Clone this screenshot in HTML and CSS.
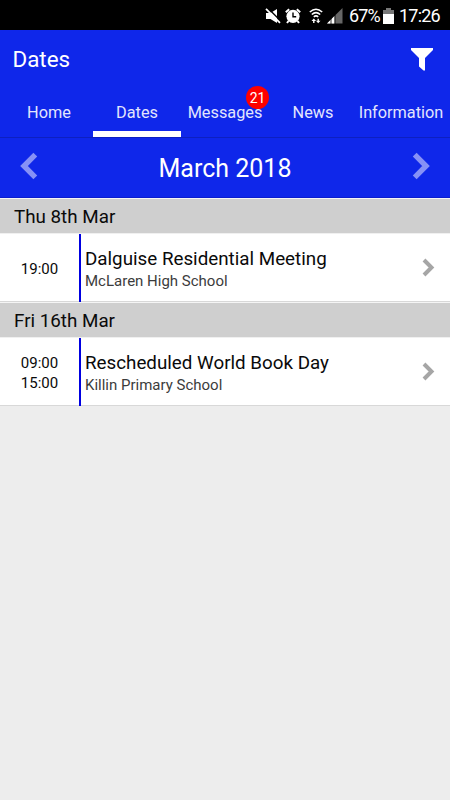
FILE: index.html
```html
<!DOCTYPE html>
<html lang="en">
<head>
<meta charset="utf-8">
<title>Dates</title>
<link rel="stylesheet" href="styles.css">
</head>

<body>
	<div class="status">
		<svg class="mute" width="16" height="16" viewBox="0 0 16 16">
			<path d="M1 5h4.5L12 1v14l-6.5-4H1z" fill="#fff"/>
			<path d="M2.8 0l14 14" stroke="#000" stroke-width="1.4"/>
			<path d="M1 .8l14 14" stroke="#fff" stroke-width="1.8"/>
		</svg>
		<svg class="alarm" width="16" height="16" viewBox="0 0 16 16">
			<circle cx="8" cy="8.3" r="6.6" fill="#fff"/>
			<path d="M.8 4.2l3.4-3M15.2 4.2l-3.4-3M3.5 13l-1.5 2M12.5 13l1.5 2" stroke="#fff" stroke-width="2"/>
			<path d="M8 4.5v4.3h3.2" fill="none" stroke="#000" stroke-width="1.4"/>
		</svg>
		<svg class="wifi" width="14" height="16" viewBox="0 0 14 16">
			<path d="M.8 4Q7-1.5 13.2 4M2.8 6.5Q7 2.8 11.2 6.5M4.8 8.8Q7 7 9.2 8.8" fill="none" stroke="#fff" stroke-width="1.6"/>
			<path d="M4.8 10.5L2.5 13h1.6v2h1.4v-2h1.6zM9.2 15.3l-2.3-2.5h1.6v-2h1.4v2h1.6z" fill="#fff"/>
		</svg>
		<svg class="signal" width="16" height="16" viewBox="0 0 16 16">
			<path d="M0 15.5L15.5 0v15.5z" fill="#666"/>
			<path d="M0 15.5L7.5 8v7.5z" fill="#fff"/>
			<path d="M4 10v6M8 7v9" stroke="#000" stroke-width=".8"/>
		</svg>
		<span class="percent">67%</span>
		<svg class="battery" width="11" height="16" viewBox="0 0 11 16">
			<path d="M3 0h5v2h3v14H0V2h3z" fill="#777"/>
			<path d="M0 6h11v10H0z" fill="#fff"/>
		</svg>
		<span class="clock">17:26</span>
	</div>

	<div class="header">
		<h1>Dates</h1>
		<svg width="22" height="23" viewBox="0 0 22 23">
			<path d="M0 0h22v2l-8 8v12.5h-1.5L8 18.5V10L0 2z" fill="#fff"/>
		</svg>
	</div>

	<div class="tabs">
		<a class="tab">Home</a>
		<a class="tab on">Dates</a>
		<a class="tab">Messages<em class="badge">21</em></a>
		<a class="tab">News</a>
		<a class="tab">Information</a>
	</div>

	<div class="month">
		<svg width="18" height="28" viewBox="0 0 18 28">
			<path d="M15.3 2.7L4 14l11.3 11.3" fill="none" stroke="#8791f6" stroke-width="5.4"/>
		</svg>
		<h2>March 2018</h2>
		<svg width="18" height="28" viewBox="0 0 18 28">
			<path d="M2.7 2.7L14 14 2.7 25.3" fill="none" stroke="#8791f6" stroke-width="5.4"/>
		</svg>
	</div>

	<div class="day">Thu 8th Mar</div>
	<div class="event">
		<div class="time">19:00</div>
		<div class="info">
			<h3>Dalguise Residential Meeting</h3>
			<p>McLaren High School</p>
		</div>
		<svg width="13" height="19" viewBox="0 0 13 19">
			<path d="M2 2l7.5 7.5L2 17" fill="none" stroke="#a6a6a6" stroke-width="4"/>
		</svg>
	</div>

	<div class="day">Fri 16th Mar</div>
	<div class="event">
		<div class="time">09:00<br>15:00</div>
		<div class="info">
			<h3>Rescheduled World Book Day</h3>
			<p>Killin Primary School</p>
		</div>
		<svg width="13" height="19" viewBox="0 0 13 19">
			<path d="M2 2l7.5 7.5L2 17" fill="none" stroke="#a6a6a6" stroke-width="4"/>
		</svg>
	</div>
</body>
</html>
```

FILE: styles.css
```css
*{margin:0; padding:0; box-sizing:border-box;}
body{background:#ededed; font-family:Roboto,"Liberation Sans",sans-serif; color:#0a0a0a;}
h1,h2,h3{font-weight:normal;}
em{font-style:normal;}
svg{display:block; flex:none;}

.status{display:flex; align-items:center; height:30px; padding:1px 10px 0 0; justify-content:flex-end; background:#000; color:#fff; font-size:18px;}
.status .mute{margin-right:4px;}
.status .alarm{margin-right:8px;}
.status .wifi{margin-right:4px;}
.status .signal{margin-right:6px;}
.status .percent{width:30px; letter-spacing:-0.9px; white-space:nowrap;}
.status .battery{margin:0 5px 0 4px;}
.status .clock{width:41px; letter-spacing:-0.8px; white-space:nowrap;}

.header{display:flex; justify-content:space-between; align-items:center; height:58px; padding:0 17px 0 12.5px; background:#0f27ea; color:#fff;}
.header h1{font-size:22.4px;}

.tabs{display:flex; height:50px; padding-left:5px; background:#0f27ea; border-bottom:1px solid #0d20c0;}
.tab{position:relative; display:flex; justify-content:center; width:88px; height:49px; color:#e3e5fd; font-size:16.3px; line-height:49px; white-space:nowrap;}
.tab.on{border-bottom:6px solid #fff;}
.badge{position:absolute; right:0; top:-2px; width:23px; height:23px; border-radius:50%; background:#fe0000; color:#fff; font-size:14px; line-height:24px; text-align:center;}

.month{display:flex; justify-content:space-between; align-items:center; height:60px; padding:0 20px; background:#0f27ea; border-bottom:1px solid #0b1dce; color:#fff;}
.month svg{margin-bottom:3px;}
.month h2{padding-top:2px; font-size:25px;}

.day{height:36px; padding-left:14px; background:#cfcfcf; border-top:1px solid #f5f5f5; border-bottom:1px solid #f0f0f0; font-size:18.8px; line-height:37px;}

.event{display:flex; align-items:center; height:68px; padding-right:15px; background:#fff; border-bottom:1px solid #d8d8d8;}
.event .time{width:79px; padding-top:2px; text-align:center; font-size:15px; line-height:20px;}
.event .info{flex:1; height:68px; padding:14px 0 0 4px; border-left:2px solid #0000e0;}
.event h3{font-size:18.8px; line-height:23px;}
.event p{font-size:15px; line-height:21px; color:#3c3c3c;}
```
